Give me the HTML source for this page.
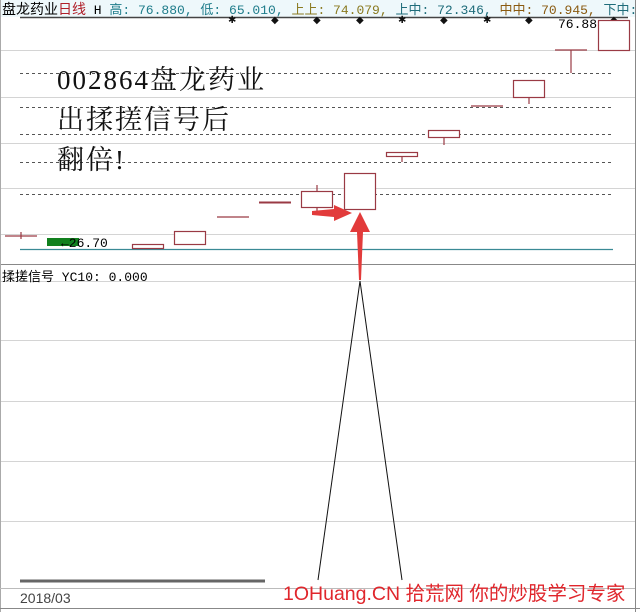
<!DOCTYPE html>
<html><head><meta charset="utf-8"><style>
body{margin:0;width:640px;height:612px;overflow:hidden;background:#fff;font-family:"Liberation Mono","Noto Sans CJK SC",monospace;}
.a{position:absolute;white-space:nowrap}
</style></head><body>
<svg class="a" style="left:0;top:0" width="640" height="612" viewBox="0 0 640 612">
<rect x="0" y="0" width="640" height="612" fill="#fff"/>
<rect x="0" y="0" width="635" height="17" fill="#eef8fb"/>
<line x1="20" y1="17.5" x2="628" y2="17.5" stroke="#444" stroke-width="1.5"/>
<g fill="#111" font-size="10" font-family="Liberation Mono">
<text x="228" y="23">✱</text><text x="271" y="23">◆</text><text x="313" y="23">◆</text><text x="356" y="23">◆</text><text x="398" y="23">✱</text><text x="440" y="23">◆</text><text x="483" y="23">✱</text><text x="525" y="23">◆</text><text x="610" y="23">◆</text>
</g>
<g stroke="#d4d4d4" stroke-width="1">
<line x1="0" y1="50.5" x2="635" y2="50.5"/><line x1="0" y1="97.5" x2="635" y2="97.5"/><line x1="0" y1="143.5" x2="635" y2="143.5"/><line x1="0" y1="188.5" x2="635" y2="188.5"/><line x1="0" y1="234.5" x2="635" y2="234.5"/>
<line x1="0" y1="281.5" x2="635" y2="281.5"/><line x1="0" y1="340.5" x2="635" y2="340.5"/><line x1="0" y1="401.5" x2="635" y2="401.5"/><line x1="0" y1="461.5" x2="635" y2="461.5"/><line x1="0" y1="521.5" x2="635" y2="521.5"/>
</g>
<g stroke="#555" stroke-width="1" stroke-dasharray="3,3">
<line x1="20" y1="73.5" x2="613" y2="73.5"/><line x1="20" y1="107.5" x2="613" y2="107.5"/><line x1="20" y1="134.5" x2="613" y2="134.5"/><line x1="20" y1="162.5" x2="613" y2="162.5"/><line x1="20" y1="194.5" x2="613" y2="194.5"/>
</g>
<line x1="20" y1="249.5" x2="613" y2="249.5" stroke="#3a8a95" stroke-width="1.2"/>
<line x1="0" y1="264.5" x2="635" y2="264.5" stroke="#888"/>
<line x1="635.5" y1="0" x2="635.5" y2="612" stroke="#888"/>
<line x1="0.5" y1="0" x2="0.5" y2="612" stroke="#aaa"/>
<g stroke="#9a3a44" stroke-width="1.2" fill="#fff">
<line x1="5" y1="236" x2="37" y2="236"/><line x1="21" y1="232" x2="21" y2="239"/>
<rect x="132.5" y="244.5" width="31" height="4"/>
<rect x="174.5" y="231.5" width="31" height="13"/>
<line x1="217" y1="217" x2="249" y2="217"/>
<line x1="259" y1="202.5" x2="291" y2="202.5" stroke-width="2"/>
<line x1="317" y1="185" x2="317" y2="213"/><rect x="301.5" y="191.5" width="31" height="16"/>
<rect x="344.5" y="173.5" width="31" height="36"/>
<rect x="386.5" y="152.5" width="31" height="4"/><line x1="402" y1="157" x2="402" y2="162"/>
<rect x="428.5" y="130.5" width="31" height="7"/><line x1="444" y1="137" x2="444" y2="145"/>
<line x1="471" y1="106" x2="503" y2="106"/>
<rect x="513.5" y="80.5" width="31" height="17"/><line x1="529" y1="97" x2="529" y2="104"/>
<line x1="555" y1="50" x2="587" y2="50"/><line x1="571" y1="50" x2="571" y2="73"/>
<rect x="598.5" y="20.5" width="31" height="30"/>
</g>
<rect x="47" y="238" width="32" height="8" fill="#11801e"/>
<g stroke="#111" stroke-width="1"><line x1="360" y1="281" x2="318" y2="580"/><line x1="360" y1="281" x2="402" y2="580"/></g>
<polygon points="312,211 334,209 334,205 352,213 334,221 334,217 312,215" fill="#e23b3b"/>
<polygon points="360,212 370,232 363,232 361,280 359,280 357,232 350,232" fill="#e23b3b"/>
<line x1="20" y1="581" x2="265" y2="581" stroke="#666" stroke-width="3"/>
<line x1="0" y1="588.5" x2="635" y2="588.5" stroke="#bbb"/>
<line x1="0" y1="608.5" x2="640" y2="608.5" stroke="#888"/>
</svg>
<div class="a" style="left:2px;top:1px;width:633px;overflow:hidden;font-size:13px;line-height:16px"><span style="font-family:'Noto Sans CJK SC',sans-serif;font-size:14px">盘龙药业</span><span style="color:#b0202a;font-family:'Noto Sans CJK SC',sans-serif;font-size:14px">日线</span> H <span style="color:#1e7c8a">高: 76.880, 低: 65.010,</span> <span style="color:#8a7a20">上上: 74.079,</span> <span style="color:#1e6c7a">上中: 72.346,</span> <span style="color:#8a5a10">中中: 70.945,</span> <span style="color:#1e6c7a">下中:</span></div>
<div class="a" style="left:558px;top:17px;font-size:13px">76.88</div>
<div class="a" style="left:61px;top:236px;font-size:13px">←26.70</div>
<div class="a" style="left:2px;top:266px;font-size:13px">揉搓信号 YC10: 0.000</div>
<div class="a" style="left:57px;top:60px;font-size:27px;line-height:40px;letter-spacing:2px;font-family:'Liberation Serif','Noto Serif CJK SC',serif;color:#111"><span style="letter-spacing:2px">002864</span>盘龙药业<br>出揉搓信号后<br>翻倍!</div>
<div class="a" style="left:20px;top:590px;font-size:14px;font-family:'Liberation Sans',sans-serif;color:#444">2018/03</div>
<div class="a" style="left:283px;top:577px;font-size:19.5px;color:#e0262c;font-family:'Liberation Sans','Noto Sans CJK SC',sans-serif">1OHuang.CN 拾荒网 你的炒股学习专家</div>
</body></html>
